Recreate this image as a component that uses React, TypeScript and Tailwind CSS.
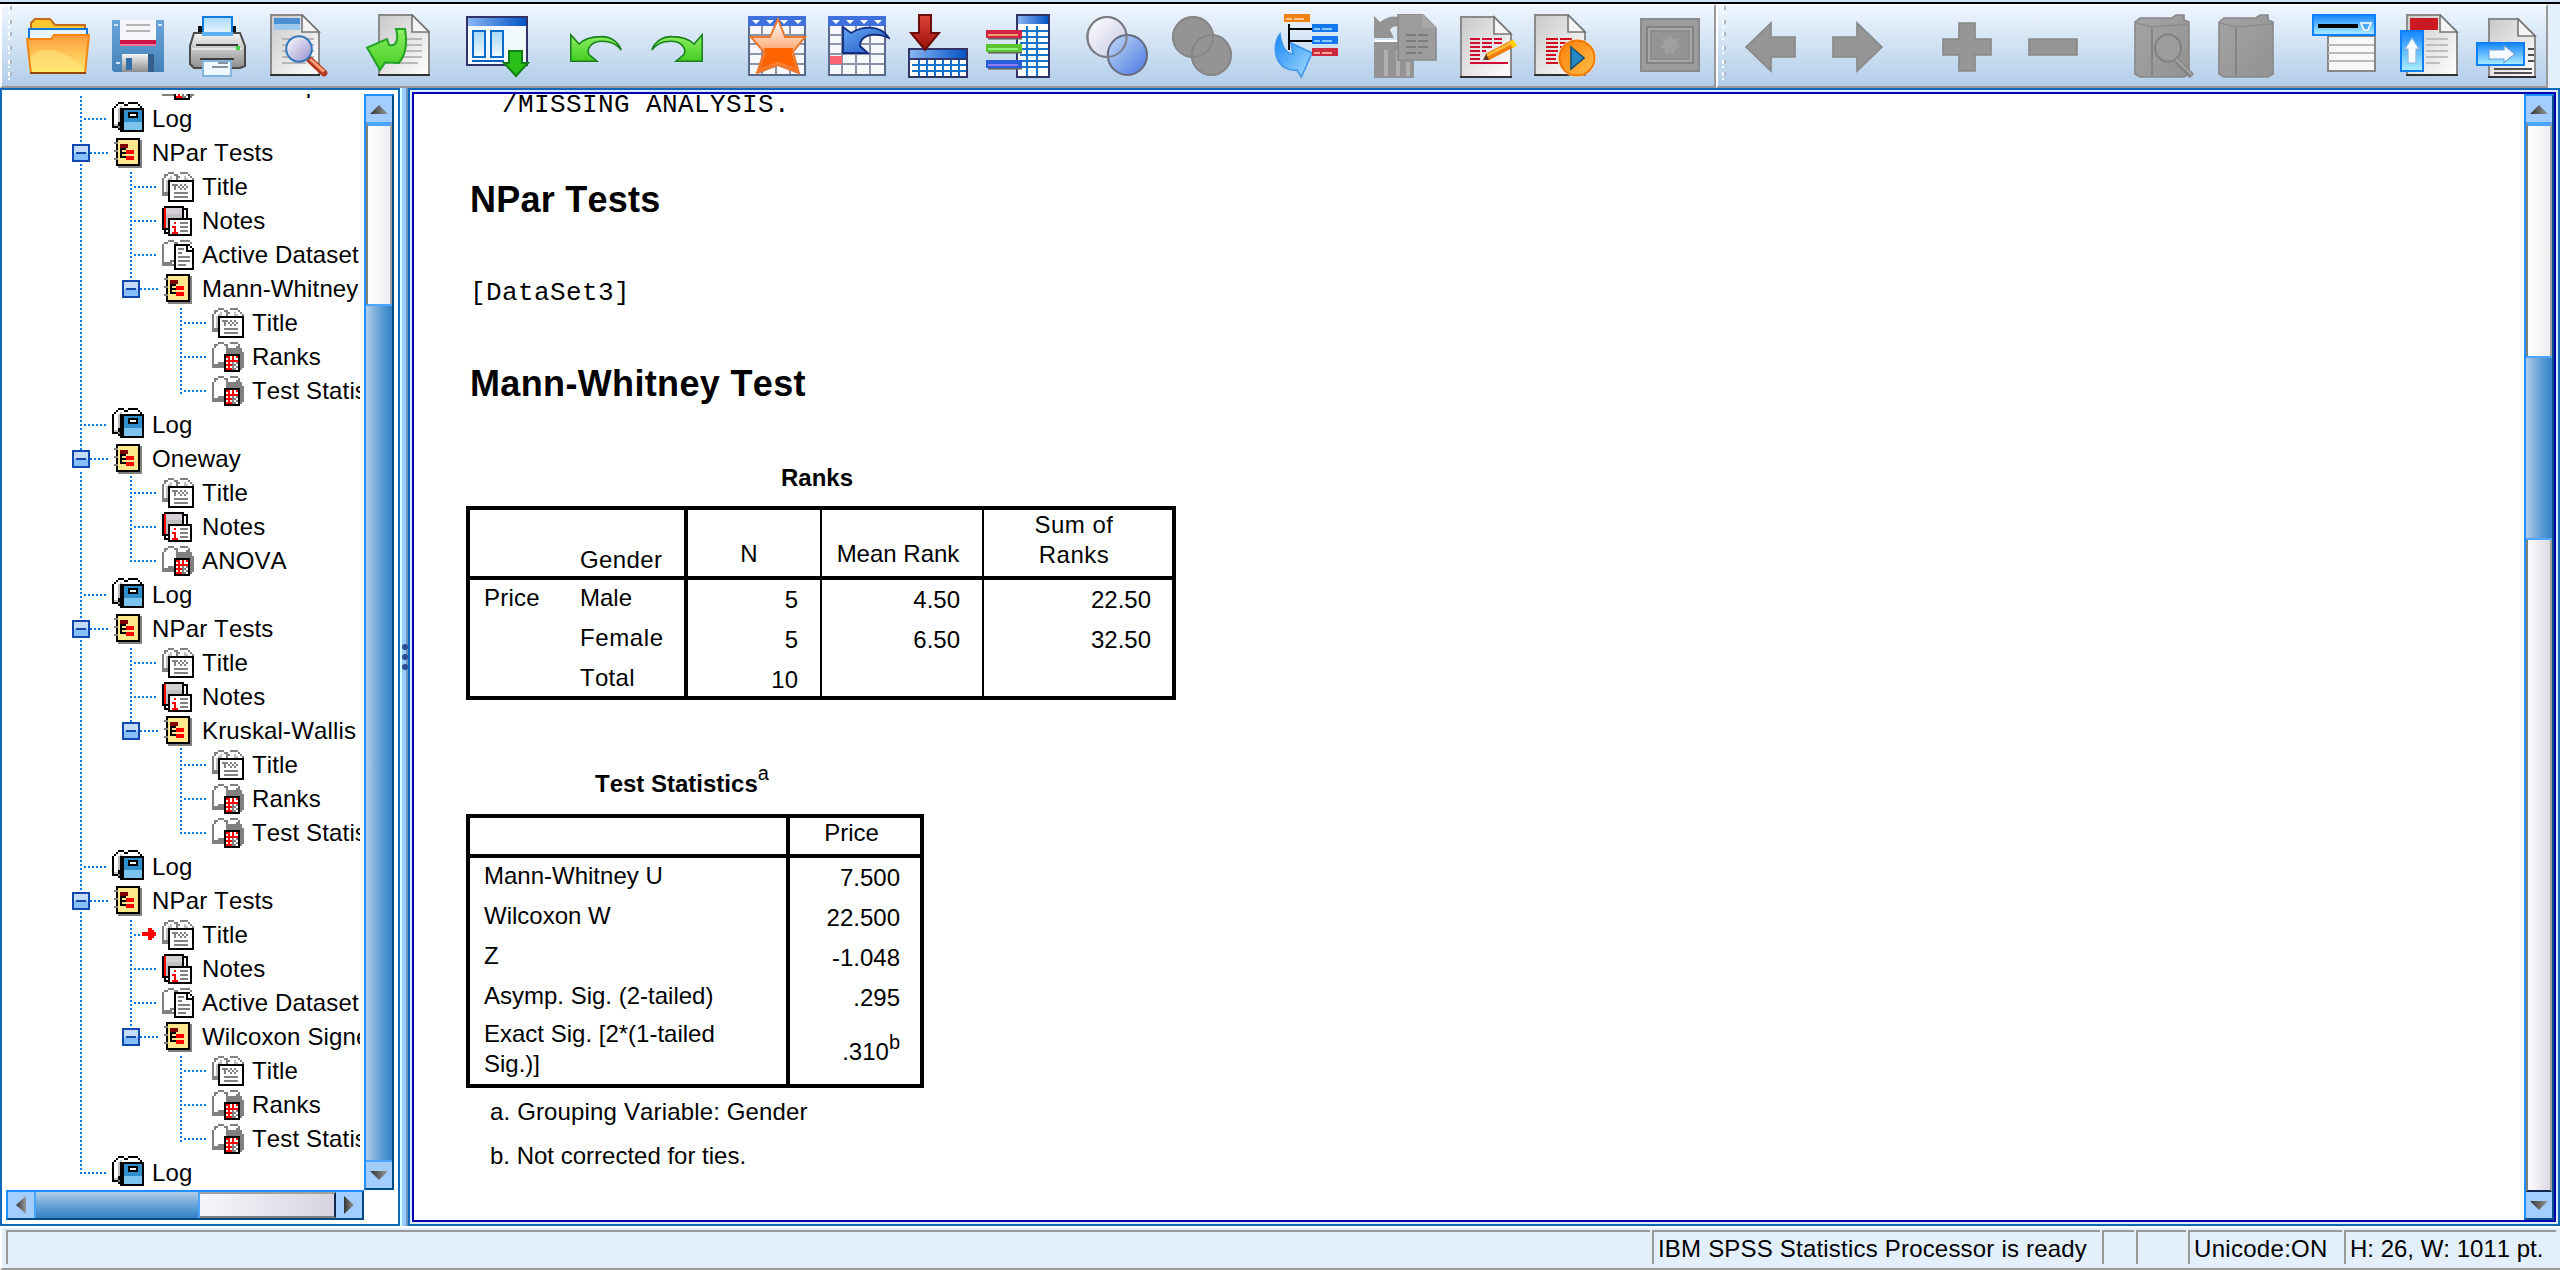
import React from "react";

const PALETTE: Record<string, string> = {
  k: "#000000", g: "#808080", l: "#c0c0c0", w: "#ffffff", r: "#ff0000",
  m: "#800000", y: "#ffe78c", b: "#2f8fcb", c: "#7cc4ee", d: "#d5d0d5",
};

const LOG = [
  "...kkk..kkkkk...",
  "..kwwwkkwwwwwk..",
  ".kwwlwwwwwwwwwk.",
  "kwwlkkkkkkkkkkkk",
  "kwwlkkbbbbbbbbbk",
  "kwwlkkbbkkkkkbbk",
  "kwwlkkbbkwwwkbbk",
  "kwwlkkbbkkkkkbbk",
  "kwwlkkbbbbbbbbbk",
  "kwwlkkbbbbbbbbbk",
  "kwwkkkccccccccck",
  "kllkkkccccccccck",
  "kkkgkkccccccccck",
  "...kkkccccccccck",
  "....kkkkkkkkkkkk",
];
const OUTLINE = [
  "................",
  "..kkkkkkkkkkkk..",
  "..kyyyyyyyyyykg.",
  ".ggyyyyyyyyyykg.",
  "..kymmmmyyyyykg.",
  "..kymmmmyyyyykg.",
  "..kykkkyyyyyykg.",
  ".ggykyyrrrryykg.",
  "..kykkkrrrryykg.",
  "..kykyyyyyyyykg.",
  "..kykkkrrrryykg.",
  ".ggyyyyrrrryykg.",
  "..kyyyyyyyyyykg.",
  "..kyyyyyyyyyykg.",
  "..kkkkkkkkkkkkg.",
  "...gggggggggggg.",
];
const TITLE = [
  "................",
  "...ggg...gggg...",
  ".ggwwwggwwwwwg..",
  ".gwwlwwggwwlwwg.",
  "gwwllwwgwwwllwwg",
  "gwlkkkkkkkkkkkkk",
  "gwlkwwwwwwwwwwwk",
  "gwlkwgggwgwgwwwk",
  "gwlkwwgwgwgwgwwk",
  "gwlkwwgwwgwgwwwk",
  "gwlkwwwwwwwwwwwk",
  "gggkwwgggggggwwk",
  "gggkwwwwwwwwwwwk",
  "...kwwgggggggwwk",
  "...kwwwwwwwwwwwk",
  "...kkkkkkkkkkkkk",
];
const NOTES = [
  "................",
  ".kkkkkkkkkk.....",
  "krddddddddkkk...",
  "krddddddddkwk...",
  "krddddddddkwk...",
  "krllllllllkwk...",
  "krllllllllkwk...",
  "krlkkkkkkkkkkkk.",
  "krlkwwwwwwwwwwk.",
  "krlkwwrwwggggwk.",
  "krlkwwwwwwwwwwk.",
  "krlkwrrwwggggwk.",
  "kkkkwwrwwwwwwwk.",
  ".kwkwwrwwggggwk.",
  ".kkkwrrrwwwwwwk.",
  "...kkkkkkkkkkkk.",
];
const DATASET = [
  "................",
  "...ggg...ggggg..",
  ".ggwwwggwwwwwwg.",
  "gwwwwwkkkkkkkk..",
  "gwwwwwkwwwwwkwk.",
  "gwwwwwkwgggwkwwk",
  "gwwwwwkwwwwwkkkk",
  "gwwwwwkwggwwwwwk",
  "gwwwwwkwwwwwwwwk",
  "gwwwwwkwggggggwk",
  "gwwwwwkwwwwwwwwk",
  "gwwwggkwggggggwk",
  "gggggwkwwwwwwwwk",
  "ggggggkwggggwwwk",
  "......kwwwwwwwwk",
  "......kkkkkkkkkk",
];
const TABLE = [
  "................",
  "...ggg...gggg...",
  ".ggwwwggwwwwwg..",
  ".gwwwwwgwwwwgg..",
  "gwwwwwwgggggggg.",
  "gwwwwwwgggggggg.",
  "gwwwwwwggggggggg",
  "gwwwwwkkkkkkkkgg",
  "gwwwwwkrrwrwrkgg",
  "gwwwwwkwrwrwwkgg",
  "gwwwwwkrrrrrrkgg",
  "gwwgggkwrwgwgkgg",
  "ggggggkrrrggwkgg",
  "ggggggkwrwgwgkgg",
  "......krrrggwkg.",
  "......kkkkkkkk..",
];
const TREE_ICONS = { log: LOG, outline: OUTLINE, title: TITLE, notes: NOTES, dataset: DATASET, table: TABLE };
type TreeIcon = keyof typeof TREE_ICONS;

function PixelIcon({ rows }: { rows: string[] }) {
  return (
    <svg viewBox="0 0 16 16" className="h-8 w-8 shrink-0" shapeRendering="crispEdges">
      {rows.flatMap((row, y) =>
        [...row].map((c, x) => (c === "." ? null : <rect key={`${x}-${y}`} x={x} y={y} width="1" height="1" fill={PALETTE[c]} />)),
      )}
    </svg>
  );
}

type Node = { level: 0 | 1 | 2; icon: TreeIcon; label: string; last?: boolean; current?: boolean };
const NODES: Node[] = [
  { level: 1, icon: "table", label: "One-Sample Statistics", last: true },
  { level: 0, icon: "log", label: "Log" },
  { level: 0, icon: "outline", label: "NPar Tests" },
  { level: 1, icon: "title", label: "Title" },
  { level: 1, icon: "notes", label: "Notes" },
  { level: 1, icon: "dataset", label: "Active Dataset" },
  { level: 1, icon: "outline", label: "Mann-Whitney", last: true },
  { level: 2, icon: "title", label: "Title" },
  { level: 2, icon: "table", label: "Ranks" },
  { level: 2, icon: "table", label: "Test Statistics", last: true },
  { level: 0, icon: "log", label: "Log" },
  { level: 0, icon: "outline", label: "Oneway" },
  { level: 1, icon: "title", label: "Title" },
  { level: 1, icon: "notes", label: "Notes" },
  { level: 1, icon: "table", label: "ANOVA", last: true },
  { level: 0, icon: "log", label: "Log" },
  { level: 0, icon: "outline", label: "NPar Tests" },
  { level: 1, icon: "title", label: "Title" },
  { level: 1, icon: "notes", label: "Notes" },
  { level: 1, icon: "outline", label: "Kruskal-Wallis", last: true },
  { level: 2, icon: "title", label: "Title" },
  { level: 2, icon: "table", label: "Ranks" },
  { level: 2, icon: "table", label: "Test Statistics", last: true },
  { level: 0, icon: "log", label: "Log" },
  { level: 0, icon: "outline", label: "NPar Tests" },
  { level: 1, icon: "title", label: "Title", current: true },
  { level: 1, icon: "notes", label: "Notes" },
  { level: 1, icon: "dataset", label: "Active Dataset" },
  { level: 1, icon: "outline", label: "Wilcoxon Signed", last: true },
  { level: 2, icon: "title", label: "Title" },
  { level: 2, icon: "table", label: "Ranks" },
  { level: 2, icon: "table", label: "Test Statistics", last: true },
  { level: 0, icon: "log", label: "Log", last: true },
];

/* One 50px indent step: dotted stem, elbow and, for branches, the collapse box. */
function Guide({ node, odd }: { node: Node; odd: boolean }) {
  const branch = node.icon === "outline";
  const from = odd ? 2 : 0;
  const dots: React.ReactElement[] = [];
  for (let y = from; y < 34; y += 4) {
    if (node.last && y > 18) continue;
    if (branch && y > 6 && y < 28) continue;
    dots.push(<rect key={`v${y}`} x="18" y={y} width="2" height="2" />);
  }
  for (let x = branch ? 28 : 22; x < 46; x += 4) {
    if (node.current && x > 26 && x < 42) continue;
    dots.push(<rect key={`h${x}`} x={x} y="16" width="2" height="2" />);
  }
  return (
    <svg viewBox="0 0 50 34" className="h-[34px] w-[50px] shrink-0" fill="#0078e6" shapeRendering="crispEdges">
      {dots}
      {branch && (
        <>
          <rect x="10" y="8" width="18" height="18" fill="#1048b0" />
          <rect x="12" y="10" width="14" height="7" fill="#c4dcfa" />
          <rect x="12" y="17" width="14" height="7" fill="#86bffc" />
          <rect x="14" y="16" width="10" height="2" fill="#1048b0" />
        </>
      )}
      {node.current && <path d="M30 14h6v-4h4v2h2v2h2v4h-2v2h-2v2h-4v-4h-6z" fill="#ff0000" />}
    </svg>
  );
}

function Stem({ odd, on }: { odd: boolean; on: boolean }) {
  return (
    <svg viewBox="0 0 50 34" className="h-[34px] w-[50px] shrink-0" fill="#0078e6" shapeRendering="crispEdges">
      {on && Array.from({ length: 9 }, (_, i) => i * 4 + (odd ? 2 : 0)).filter((y) => y < 34).map((y) => (
        <rect key={y} x="18" y={y} width="2" height="2" />
      ))}
    </svg>
  );
}

function TreeRow({ node, index }: { node: Node; index: number }) {
  const odd = index % 2 === 1;
  return (
    <div className="flex h-[34px] shrink-0 items-start whitespace-nowrap">
      {node.level > 0 && <Stem odd={odd} on />}
      {node.level > 1 && <Stem odd={odd} on={false} />}
      <Guide node={node} odd={odd} />
      <PixelIcon rows={TREE_ICONS[node.icon]} />
      <span className="pl-[8px] text-[24px] leading-[34px] tracking-[0.15px]">{node.label}</span>
    </div>
  );
}

function Arrow({ dir }: { dir: "up" | "down" | "left" | "right" }) {
  const d = { up: "M9 1L18 10H0Z", down: "M0 1H18L9 10Z", left: "M10 0V18L0 9Z", right: "M0 0L10 9L0 18Z" }[dir];
  const vertical = dir === "up" || dir === "down";
  return (
    <svg viewBox={vertical ? "0 0 18 11" : "0 0 10 18"} className={vertical ? "h-[11px] w-[18px]" : "h-[18px] w-[10px]"}>
      <defs>
        <linearGradient id={`arrow-${dir}`} x1="0" x2="1">
          <stop offset="0" stopColor="#333" />
          <stop offset="1" stopColor="#999" />
        </linearGradient>
      </defs>
      <path d={d} fill={`url(#arrow-${dir})`} />
    </svg>
  );
}

function ThumbV({ className }: { className: string }) {
  return <div className={`shrink-0 border-y-2 border-[#4aa5ff] bg-[linear-gradient(to_right,#b2cfe9_0%,#7eb0de_35%,#5096d2_70%,#3580c4_100%)] ${className}`} />;
}

/* ---------- toolbar drawings, each on a 32-unit canvas ---------- */

function Tool({ className = "", children }: { className?: string; children: React.ReactNode }) {
  return <svg viewBox="0 0 32 32" className={`h-16 w-16 shrink-0 ${className}`}>{children}</svg>;
}

function Defs() {
  const lin = (id: string, a: string, b: string, diag = false) => (
    <linearGradient id={id} x1="0" y1="0" x2={diag ? "1" : "0"} y2="1">
      <stop offset="0" stopColor={a} />
      <stop offset="1" stopColor={b} />
    </linearGradient>
  );
  return (
    <svg className="absolute h-0 w-0">
      <defs>
        {lin("folder", "#ff9a3c", "#ffee70")}
        {lin("paper", "#c9c9c9", "#ffffff", true)}
        {lin("steel", "#f4f4f4", "#8e8e8e")}
        {lin("floppy", "#6aa6dc", "#4682b8")}
        {lin("lime", "#8cf060", "#44cc22")}
        {lin("sheet", "#a8d8fa", "#f0faff")}
        {lin("star", "#ffffff", "#ff6a10")}
        {lin("blue", "#66a8f4", "#1c50c0", true)}
        {lin("sky", "#1486ff", "#b0f0ff")}
        {lin("aqua", "#1684f4", "#a8e0ff", true)}
        {lin("red", "#e04438", "#98100c")}
        {lin("lens", "#ffffff", "#9490cc", true)}
        {lin("pale", "#ffffff", "#c4c8e4", true)}
        {lin("peri", "#c4daf8", "#4878e0", true)}
        {lin("orange", "#ff7a08", "#ffc048", true)}
        {lin("grey", "#a4a4a4", "#929292", true)}
        <linearGradient id="bar" x1="0" x2="1">
          <stop offset="0" stopColor="#88b4f0" />
          <stop offset="1" stopColor="#0454c8" />
        </linearGradient>
      </defs>
    </svg>
  );
}

function DocPage({ x, y, w, h, fold }: { x: number; y: number; w: number; h: number; fold: number }) {
  const r = x + w;
  return (
    <>
      <path d={`M${x + 0.5} ${y + 0.5}H${r - fold}L${r - 0.5} ${y + fold}V${y + h - 0.5}H${x + 0.5}Z`} fill="url(#paper)" stroke="#8a8a8a" />
      <path d={`M${x} ${y + h - 0.5}H${r}`} stroke="#303030" />
      <path d={`M${r - fold} ${y + 0.5}V${y + fold}H${r - 0.5}Z`} fill="#f4f4f4" stroke="#777" strokeWidth=".8" />
    </>
  );
}

function GridSheet() {
  return (
    <>
      <rect x="1.5" y="1.5" width="28" height="29" fill="#f6f8fc" stroke="#5a6a8c" />
      <path d="M2 10.5h27M2 15h27M2 20h27M2 25h27M8 6v24M15 6v24M22 6v24" stroke="#8c94ac" />
      <rect x="1" y="1" width="29" height="5" fill="#4070dc" />
      <path d="M3 3h4l-2 2zM10 3h4l-2 2zM17 3h4l-2 2zM24 3h4l-2 2z" fill="#fff" />
    </>
  );
}

const UNDO = "M2.400 10.400V23.600H15.500L11.500 20.300C10 17 13 13.600 18 13.600C22 13.600 25.500 15.200 27.600 18C26 13.500 22 11.200 17.500 11.300C13 11.300 9 12.500 6.500 15Z";

function MainTools() {
  return (
    <>
      <Tool>
        <path d="M2.500 12V4.500L4.500 2.500H12L14.500 5.500H29.500V12Z" fill="#ffc830" stroke="#c86a1c" />
        <path d="M1.500 13V7.500H30.500V13" fill="#e8f4ff" stroke="#0c78e0" />
        <path d="M.5 12.500H12.500L14 10.500H31.500L29.500 29.500H2.500Z" fill="url(#folder)" stroke="#f48410" />
        <path d="M2 22C7 15 20 17 29 28H3Z" fill="#ffe27a" opacity=".6" />
        <path d="M2 29.500H30" stroke="#9c4404" />
      </Tool>
      <Tool className="ml-4">
        <path d="M3 3H29V29H4L3 28Z" fill="url(#floppy)" />
        <path d="M7 3H25V16H7Z" fill="#f4f6fa" />
        <path d="M7 13H25V15H7Z" fill="#cc1444" />
        <path d="M7 15H25V16H7Z" fill="#e87c98" />
        <path d="M10 5.500H22M10 8.500H22" stroke="#b4b4b4" />
        <path d="M8 20H21V29H8Z" fill="url(#steel)" />
        <path d="M10 22H13V28H10Z" fill="#3470ac" />
        <path d="M21 20H24V29H21Z" fill="#33608f" />
        <path d="M4 5H6V6H4ZM26 5H28V6H26ZM5 24H7V25H5Z" fill="#cfe4f6" />
      </Tool>
      <Tool className="ml-4">
        <path d="M6 6H25V12H6Z" fill="#111" />
        <path d="M8.500 1.500H23V11H8.500Z" fill="url(#sheet)" stroke="#0c7ce0" />
        <path d="M4 9.500H27L29.500 16V26L27 27H4L2 25V16Z" fill="url(#steel)" stroke="#4a4a4a" />
        <path d="M8 9H23.500V11H8Z" fill="#5cb0f0" />
        <path d="M5 15.500H26M7 22.500H24" stroke="#3c3c3c" />
        <path d="M3 17.500H28" stroke="#e4e4e4" />
        <path d="M25 16H27V18H25Z" fill="#44d044" />
        <path d="M8.500 23.500H22.500V31H8.500Z" fill="#eef8ff" stroke="#84b4dc" />
        <path d="M16 24.500H21M13 26.500H21" stroke="#88929c" />
      </Tool>
      <Tool className="ml-4">
        <DocPage x={2} y={0} w={25} h={31} fold={9} />
        <path d="M4 2H17V5H4Z" fill="#4c90d4" />
        <path d="M4 5H17V8H4Z" fill="#9cc8ee" />
        <path d="M8 12.500H24M8 15.500H24M8 18.500H24M8 21.500H24M8 24.500H20" stroke="#a8a8a8" strokeWidth=".8" />
        <path d="M22 23L29 29.500" stroke="#b43820" strokeWidth="3.400" strokeLinecap="round" />
        <path d="M22 22.500L29 28.800" stroke="#ffa078" strokeWidth="1.400" />
        <circle cx="16.500" cy="17.500" r="6.400" fill="url(#lens)" stroke="#3478bc" />
      </Tool>
      <Tool className="ml-9">
        <DocPage x={6} y={0} w={26} h={31} fold={9} />
        <path d="M20 12.500H28M20 15.500H28M19 18.500H28M17 21.500H28M14 24.500H26" stroke="#a8a8a8" strokeWidth=".8" />
        <path d="M.5 16.800L10.500 12.500L11.500 15.500C15 16.500 16.500 13 15 7.500H19.500C21 16 19.500 21 16.500 24.500L9.500 24.300L7 28Z" fill="url(#lime)" stroke="#24a028" />
      </Tool>
      <Tool className="ml-9">
        <path d="M.5 1.500H30.500V25.500H.5Z" fill="#f2f9fd" stroke="#303468" />
        <path d="M1 2H30V6H1Z" fill="url(#bar)" />
        <path d="M3.500 8.500H9.500V21.500H3.500ZM12.500 8.500H18.500V21.500H12.500Z" fill="url(#sheet)" stroke="#0c6ccc" />
        <path d="M3 23.500H19" stroke="#0c60c0" />
        <path d="M21.500 18.500H28V24.500H31L25 31L19 24.500H21.500Z" fill="#28c018" stroke="#108010" />
      </Tool>
      <Tool className="ml-9"><path d={UNDO} fill="url(#lime)" stroke="#18801c" strokeWidth=".8" /></Tool>
      <Tool className="ml-4"><path d={UNDO} transform="translate(30.500 0) scale(-1 1)" fill="url(#lime)" stroke="#18801c" strokeWidth=".8" /></Tool>
      <Tool className="ml-9">
        <GridSheet />
        <path d="M16 2.500L19.500 11.500H29.500L23.500 19L26.500 29.500L16 25.500L5.500 29.500L9 19L2.500 11.500H12Z" fill="url(#star)" stroke="#e87830" />
        <path d="M9 17H23.500L23 20L25 27L16 24L7 27L9.500 20Z" fill="#ff6400" />
      </Tool>
      <Tool className="ml-4">
        <GridSheet />
        <path d="M2 21H8V25H2Z" fill="#f86470" />
        <path d="M8.500 6.500V19.500H21L17 16C17 11 23 8.500 31.500 12C27 5 18 6 12.500 9.500Z" fill="url(#blue)" stroke="#102c78" strokeWidth=".9" />
      </Tool>
      <Tool className="ml-4">
        <path d="M1.500 17.500H30.500V31.500H1.500Z" fill="#fff" stroke="#303468" />
        <path d="M2 18H30V22H2Z" fill="url(#bar)" />
        <path d="M2 22.500H30" stroke="#303468" />
        <path d="M3 25.500H30M3 28.500H30M6.500 23V31M10.500 23V31M14.500 23V31M18.500 23V31M22.500 23V31M26.500 23V31" stroke="#1474cc" />
        <path d="M6.500.5H12.500V9.500H16.500L9.500 18L2.500 9.500H6.500Z" fill="url(#red)" stroke="#6c0c08" />
      </Tool>
      <Tool className="ml-4">
        <path d="M15.500.5H31.500V31.500H15.500Z" fill="#fff" stroke="#303468" />
        <path d="M16 1H31V5H16Z" fill="url(#bar)" />
        <path d="M17 8.500H31M17 11.500H31M17 14.500H31M17 17.500H31M17 20.500H31M17 23.500H31M17 26.500H31M20.500 6V31M25.500 6V31" stroke="#1474cc" />
        {[[8, "#d02440", "#f0a070"], [15, "#5cc430", "#90f080"], [23, "#2860dc", "#8c7cf0"]].map(([y, a, b]) => (
          <React.Fragment key={y}>
            <rect x="1" y={Number(y) + 3.500} width="17" height="1.300" fill="#666" />
            <rect x="0" y={y} width="18" height="4" fill={String(a)} />
            <rect x="1" y={Number(y) + 2} width="15" height="1" fill={String(b)} />
          </React.Fragment>
        ))}
      </Tool>
      <Tool className="ml-9">
        <ellipse cx="10.500" cy="11.500" rx="9.800" ry="10" fill="url(#pale)" stroke="#7c7c84" />
        <ellipse cx="20.700" cy="20.500" rx="9.800" ry="10" fill="url(#peri)" stroke="#66687c" />
        <ellipse cx="10.500" cy="11.500" rx="9.800" ry="10" fill="none" stroke="#7c7c84" />
      </Tool>
      <Tool className="ml-5">
        <ellipse cx="11.500" cy="11.500" rx="10.500" ry="10.500" fill="#949494" />
        <ellipse cx="20.700" cy="20.500" rx="10.300" ry="10.500" fill="#949494" />
        <ellipse cx="11.500" cy="11.500" rx="10" ry="10" fill="none" stroke="#868686" />
        <ellipse cx="20.700" cy="20.500" rx="9.800" ry="10" fill="none" stroke="#868686" />
      </Tool>
      <Tool className="ml-10">
        <path d="M3 10C0 14 0 20 2.500 24C4.500 27 8 28.500 11.500 28L13.700 31.500L19 19.500L8.500 14.500L9.500 20C6.500 20 4 17 3 10Z" fill="url(#aqua)" stroke="#3c94ec" strokeWidth=".8" />
        <path d="M7.500 5V18M7.500 7.500H19M7.500 13.500H19" stroke="#000" fill="none" />
        {[[5, 0, "#f08010", "#ffc890"], [19, 5, "#1478f0", "#88ccff"], [19, 11, "#1478f0", "#88ccff"], [19, 17, "#cc2840", "#ffa890"]].map(([x, y, a, b]) => (
          <React.Fragment key={`${x}${y}`}>
            <rect x={x} y={y} width="13" height="4" fill={String(a)} />
            <rect x={Number(x) + 1} y={Number(y) + 2} width="3" height="1" fill={String(b)} />
            <rect x={Number(x) + 5} y={Number(y) + 2} width="5" height="1" fill={String(b)} />
          </React.Fragment>
        ))}
      </Tool>
      <Tool className="ml-9">
        <path d="M0 1L3 4C8 0 14 0 18 6L14 8C12 5 9 6 8 8L10 12H0Z" fill="#949494" />
        <path d="M0 13.500H12" stroke="#fff" />
        <path d="M0 14H20V32H0Z" fill="#949494" />
        <path d="M6 18V31M12 18V31M17 24V31" stroke="#b0b0b0" strokeWidth="2" />
        <path d="M12 0H24L31 7V23H12Z" fill="#9c9c9c" stroke="#8a8a8a" strokeWidth=".8" />
        <path d="M24 0V7H31" fill="#a8a8a8" />
        <path d="M16 10.500H27M16 13.500H27M16 16.500H27M16 19.500H24" stroke="#7c7c7c" strokeDasharray="5 1" />
      </Tool>
      <Tool className="ml-5">
        <DocPage x={1} y={1} w={26} h={31} fold={9} />
        <path d="M6 12.500H22M6 14.500H22M6 16.500H17M6 18.500H14M6 20.500H12M6 22.500H12" stroke="#d00c34" strokeDasharray="5 1" />
        <path d="M6 24.500H25" stroke="#d00c34" />
        <path d="M14.500 21.500L28 14.500" stroke="#f07c08" strokeWidth="3.600" />
        <path d="M14.500 20.800L28 13.800" stroke="#ffb838" strokeWidth="1.400" />
        <path d="M26.500 15.500L28.500 14.300" stroke="#ffd400" strokeWidth="3.600" />
        <path d="M12.500 23L15.600 23L14 20Z" fill="#5c3c1c" />
      </Tool>
      <Tool className="ml-3">
        <DocPage x={0} y={0} w={26} h={31} fold={9} />
        <path d="M6 12.500H20M6 14.500H16M6 16.500H14M6 18.500H12M6 20.500H11M6 22.500H11M6 24.500H12" stroke="#d00c1c" strokeDasharray="6 1" />
        <circle cx="21.500" cy="22" r="9.600" fill="#fff" opacity=".8" />
        <circle cx="21.500" cy="22" r="8.800" fill="url(#orange)" stroke="#f07800" />
        <path d="M18.500 16.500L25 22L18.500 27.500Z" fill="#2888c4" stroke="#145078" strokeWidth=".8" />
      </Tool>
      <Tool className="ml-10">
        <path d="M1.500 2.500H30.500V28.500H1.500Z" fill="#9c9c9c" stroke="#8a8a8a" />
        <path d="M4.500 6.500H27.500V24.500H4.500Z" fill="#a8a8a8" stroke="#838383" />
        <path d="M6.500 8.500H25.500V22.500H6.500Z" fill="#949494" stroke="#8c8c8c" />
        <path d="M16 10L17.500 13L20.500 12L19.500 15L21 17L18.500 18L17.500 21L16 19L13.500 20.500L13.500 17.500L11 16.500L13 15L12 12L15 13Z" fill="#a0a0a0" />
      </Tool>
    </>
  );
}

const BIG_ARROW = "M3 16.500L15.500 4.500V11.500H27.500V21.500H15.500V28.500Z";

function Book() {
  return (
    <>
      <path d="M1.500 4L4 2H20L22 .5H26V3L28.500 4V30L26 31.500H4L1.500 30Z" fill="url(#grey)" stroke="#888" strokeWidth=".8" />
      <path d="M10 7V31" stroke="#848484" />
      <path d="M2 4.500L10 6.500L28 5" stroke="#8c8c8c" fill="none" strokeWidth=".8" />
    </>
  );
}

function OutlineTools() {
  return (
    <>
      <Tool className="ml-[8px]"><path d={BIG_ARROW} fill="#959595" stroke="#888" strokeWidth=".8" /></Tool>
      <Tool className="ml-[22px]"><path d={BIG_ARROW} transform="translate(31 0) scale(-1 1)" fill="#959595" stroke="#888" strokeWidth=".8" /></Tool>
      <Tool className="ml-[46px]"><path d="M11.500 4.500H19.500V12.500H27.500V20.500H19.500V28.500H11.500V20.500H3.500V12.500H11.500Z" fill="#969696" stroke="#888" strokeWidth=".8" /></Tool>
      <Tool className="ml-[22px]"><path d="M3.500 12.500H27.500V20.500H3.500Z" fill="#969696" stroke="#888" strokeWidth=".8" /></Tool>
      <Tool className="ml-[46px]">
        <Book />
        <ellipse cx="18" cy="17" rx="6.500" ry="6.800" fill="#9c9c9c" stroke="#808080" />
        <path d="M22 23L30 31" stroke="#848484" strokeWidth="3" />
        <path d="M22 22.500L30 30.500" stroke="#a4a4a4" />
      </Tool>
      <Tool className="ml-[18px]"><g transform="translate(1 0)"><Book /></g></Tool>
      <Tool className="ml-[34px]">
        <path d="M8 11H31.500V28.500H8Z" fill="#f8f8f8" stroke="#888" />
        <path d="M8 15.500H31M8 19.500H31M8 23.500H31" stroke="#b8b8b8" />
        <path d="M.5.500H31.500V10.500H.5Z" fill="url(#sky)" stroke="#1080f8" />
        <path d="M3 5H23V7H3Z" fill="#000" />
        <path d="M24.500 4.500H29.500L28 8H26Z" fill="#4ca4ff" stroke="#fff" strokeWidth=".8" />
      </Tool>
      <Tool className="ml-[22px]">
        <DocPage x={4} y={0} w={26} h={31} fold={9} />
        <path d="M6 2H20V8H6Z" fill="#cc1820" />
        <path d="M14 12.500H25M14 15.500H25M14 18.500H25M14 21.500H25M14 24.500H21" stroke="#b0b0b0" strokeWidth=".8" />
        <path d="M1.500 8.500H12.500V28.500H1.500Z" fill="url(#sky)" stroke="#1080f8" />
        <path d="M7 12L10.500 17.500H9V24.500H5V17.500H3.500Z" fill="#f4faff" stroke="#8cb8e0" strokeWidth=".6" />
      </Tool>
      <Tool className="ml-[14px]">
        <DocPage x={6} y={2} w={24} h={30} fold={9} />
        <path d="M26 17.500H29M26 20.500H29M26 23.500H29M9 27.500H28M9 29.500H28" stroke="#505050" />
        <path d="M.5 14.500H24V25.500H.5Z" fill="url(#sky)" stroke="#1080f8" />
        <path d="M6.500 18H14V15.800L19.500 20L14 24.300V22.500H6.500Z" fill="#f4faff" stroke="#6ca0d8" strokeWidth=".6" />
      </Tool>
    </>
  );
}

function Grip() {
  return (
    <svg viewBox="0 0 4 80" className="h-20 w-1 shrink-0" shapeRendering="crispEdges">
      {[0, 14, 26, 40, 54, 66].map((y) => (
        <React.Fragment key={y}>
          <rect x="0" y={y} width="2" height="4" fill="#fff" />
          <rect x="2" y={y} width="2" height="4" fill="#a9b9c9" />
          <rect x="0" y={y + 6} width="2" height="2" fill="#fff" />
        </React.Fragment>
      ))}
    </svg>
  );
}

const OutputTitle = ({ className, children }: { className: string; children: React.ReactNode }) => (
  <div className={`font-bold whitespace-pre ${className}`}>{children}</div>
);

function RanksTable() {
  return (
    <div className="flex h-[194px] w-[710px] border-4 border-black text-[24px] leading-[30px] whitespace-nowrap">
      <div className="flex w-[214px] flex-col">
        <div className="h-[66px] pt-[35px] pl-[110px] tracking-[0.4px]">Gender</div>
        <div className="grid h-[120px] auto-rows-[40px] grid-cols-[96px_104px] border-t-4 border-black pt-[3px] pl-[14px]">
          <span className="tracking-[0.2px]">Price</span><span>Male</span>
          <span className="col-start-2 tracking-[0.6px]">Female</span>
          <span className="col-start-2 tracking-[0.3px]">Total</span>
        </div>
      </div>
      <div className="flex w-[136px] flex-col border-l-4 border-black">
        <div className="h-[66px] pt-[29px] pr-[10px] text-center">N</div>
        <div className="grid h-[120px] auto-rows-[40px] border-t-4 border-black pt-[5px] pr-[22px] text-right"><span>5</span><span>5</span><span>10</span></div>
      </div>
      <div className="flex w-[162px] flex-col border-l-2 border-black">
        <div className="h-[66px] pt-[29px] pr-[8px] text-center">Mean Rank</div>
        <div className="grid h-[120px] auto-rows-[40px] border-t-4 border-black pt-[5px] pr-[22px] text-right"><span>4.50</span><span>6.50</span></div>
      </div>
      <div className="flex w-[190px] flex-col border-l-2 border-black">
        <div className="h-[66px] pt-0 pr-[8px] text-center leading-[30px] tracking-[0.5px]">Sum of<br />Ranks</div>
        <div className="grid h-[120px] auto-rows-[40px] border-t-4 border-black pt-[5px] pr-[21px] text-right"><span>22.50</span><span>32.50</span></div>
      </div>
    </div>
  );
}

function StatisticsTable() {
  return (
    <div className="flex h-[274px] w-[458px] border-4 border-black text-[24px] leading-[30px] whitespace-nowrap">
      <div className="flex w-[316px] flex-col">
        <div className="h-9" />
        <div className="flex flex-1 flex-col border-t-4 border-black pt-[3px] pl-[14px]">
          <span className="h-10">Mann-Whitney U</span>
          <span className="h-10">Wilcoxon W</span>
          <span className="h-10">Z</span>
          <span className="h-[38px]">Asymp. Sig. (2-tailed)</span>
          <span>Exact Sig. [2*(1-tailed<br />Sig.)]</span>
        </div>
      </div>
      <div className="flex flex-1 flex-col border-l-4 border-black">
        <div className="h-9 pr-[7px] text-center">Price</div>
        <div className="flex flex-1 flex-col border-t-4 border-black pt-[5px] pr-[20px] text-right">
          <span className="h-10">7.500</span>
          <span className="h-10">22.500</span>
          <span className="h-10">-1.048</span>
          <span className="h-[54px]">.295</span>
          <span className="flex justify-end">.310<span className="-mt-[10px] text-[20px]">b</span></span>
        </div>
      </div>
    </div>
  );
}

function StatusCell({ className, children }: { className: string; children?: React.ReactNode }) {
  return (
    <div className={`h-[34px] shrink-0 overflow-hidden border-t-2 border-l-2 border-[#999] text-[24px] leading-[34px] whitespace-nowrap ${className}`}>{children}</div>
  );
}

export default function App() {
  return (
    <div className="flex h-[1270px] w-[2560px] flex-col overflow-hidden bg-white font-['Liberation_Sans',Arial,sans-serif] text-black [font-kerning:none]">
      <Defs />
      <div className="h-[4px] shrink-0 border-b-2 border-black bg-[#cfe4f8]" />
      <div className="flex h-[84px] shrink-0 bg-[#e3f0fb]">
        <div className="flex h-[84px] w-[1716px] items-start border-t-2 border-r-2 border-b-2 border-l-2 border-t-white border-r-[#999] border-b-[#999] border-l-white bg-[linear-gradient(to_bottom,#eef6fe,#b2cde9)]">
          <div className="pl-[6px]"><Grip /></div>
          <div className="flex pt-2 pl-[14px]"><MainTools /></div>
        </div>
        <div className="flex h-[84px] w-[832px] items-start border-t-2 border-r-2 border-b-2 border-l-2 border-t-white border-r-[#999] border-b-[#999] border-l-white bg-[linear-gradient(to_bottom,#eef6fe,#b2cde9)]">
          <div className="pl-[4px]"><Grip /></div>
          <div className="flex pt-2 pl-[6px]"><OutlineTools /></div>
        </div>
      </div>

      <div className="flex h-[1138px] shrink-0">
        <div className="flex w-[400px] shrink-0 flex-col border-2 border-[#1068b8] bg-white pt-1">
          <div className="flex h-[1096px]">
            <div className="flex w-[358px] flex-col overflow-hidden pl-[60px]">
              <div className="-mt-[26px] flex flex-col">
                {NODES.map((n, i) => <TreeRow key={i} node={n} index={i} />)}
              </div>
            </div>
            <div className="ml-1 flex w-[30px] flex-col border-t-2 border-r-2 border-b-2 border-l-2 border-t-[#1e90ff] border-r-[#004a84] border-b-[#004a84] border-l-[#1e90ff]">
              <div className="flex h-[26px] shrink-0 items-center justify-center bg-[#a3ccff]"><Arrow dir="up" /></div>
              <div className="h-[182px] shrink-0 border-t-4 border-r-2 border-l-2 border-t-[#4aa5ff] border-r-[#a0a0a0] border-l-[#808080] bg-[linear-gradient(to_right,#ffffff,#eeeef2)]" />
              <ThumbV className="h-[858px]" />
              <div className="flex h-[26px] shrink-0 items-center justify-center bg-[#a3ccff]"><Arrow dir="down" /></div>
            </div>
          </div>
          <div className="ml-1 flex h-[30px] w-[358px] border-t-2 border-r-2 border-b-2 border-l-2 border-t-[#1e90ff] border-r-[#004a84] border-b-[#004a84] border-l-[#1e90ff]">
            <div className="flex w-[26px] items-center justify-center bg-[#a3ccff]"><Arrow dir="left" /></div>
            <div className="w-[166px] border-x-2 border-[#4aa5ff] bg-[linear-gradient(to_bottom,#b2cfe9_0%,#7eb0de_35%,#5096d2_70%,#3580c4_100%)]" />
            <div className="w-[136px] border-y-2 border-r-2 border-t-[#a0a0a0] border-r-[#102850] border-b-[#808080] bg-[linear-gradient(to_right,#f6f6fa,#d6d4e0)]" />
            <div className="flex w-[26px] items-center justify-center bg-[#a3ccff]"><Arrow dir="right" /></div>
          </div>
        </div>

        <div className="flex w-2 shrink-0 flex-col items-center justify-center gap-1 bg-[linear-gradient(to_right,#d8ffff_0_2px,#99ccff_2px_6px,#6b93bb_6px_8px)]">
          {[0, 1, 2].map((i) => <span key={i} className="ml-[2px] h-[6px] w-[6px] rounded-sm bg-[#2c4c94]" />)}
        </div>

        <div className="flex w-[2152px] shrink-0 border-2 border-[#1068b8] bg-[#dfeaf8] p-[2px]">
          <div className="flex flex-1 border-2 border-[#0000b0] bg-white">
            <div className="flex w-[2110px] flex-col overflow-hidden pl-[52px]">
              <div className="pl-[4px] font-['Liberation_Mono','Courier_New',monospace] text-[26px] leading-[22px] tracking-[0.4px] whitespace-pre">  /MISSING ANALYSIS.</div>
              <OutputTitle className="mt-[64px] pl-[4px] text-[36px] leading-[40px] tracking-[0.25px]">NPar Tests</OutputTitle>
              <div className="mt-[58px] pl-[4px] font-['Liberation_Mono','Courier_New',monospace] text-[26px] leading-[30px] tracking-[0.4px]">[DataSet3]</div>
              <OutputTitle className="mt-[56px] pl-[4px] text-[36px] leading-[40px] tracking-[0.35px]">Mann-Whitney Test</OutputTitle>
              <OutputTitle className="mt-[59px] w-[710px] pr-[8px] text-center text-[24px] leading-[30px]">Ranks</OutputTitle>
              <div className="mt-[13px]"><RanksTable /></div>
              <OutputTitle className="mt-[69px] h-[30px] pl-[129px] text-[24px] leading-[30px]">
                Test Statistics<span className="relative -top-[12px] text-[20px] leading-none font-normal">a</span>
              </OutputTitle>
              <div className="mt-[15px]"><StatisticsTable /></div>
              <div className="mt-[9px] pl-[24px] text-[24px] leading-[30px] tracking-[0.15px]">a. Grouping Variable: Gender</div>
              <div className="mt-[14px] pl-[24px] text-[24px] leading-[30px]">b. Not corrected for ties.</div>
            </div>
            <div className="flex w-[30px] shrink-0 flex-col border-t-2 border-r-2 border-b-2 border-l-2 border-t-[#1e90ff] border-r-[#0a5089] border-b-[#0a5089] border-l-[#1e90ff]">
              <div className="flex h-[26px] shrink-0 items-center justify-center bg-[#a3ccff]"><Arrow dir="up" /></div>
              <div className="h-[234px] shrink-0 border-t-4 border-r-2 border-l-2 border-t-[#4aa5ff] border-r-[#a0a0a0] border-l-[#808080] bg-[linear-gradient(to_right,#ffffff,#eeeef2)]" />
              <ThumbV className="h-[184px]" />
              <div className="h-[652px] shrink-0 border-r-2 border-b-2 border-l-2 border-r-[#a0a0a0] border-b-[#102850] border-l-[#808080] bg-[linear-gradient(to_right,#fcfcfe,#dcdae4)]" />
              <div className="flex flex-1 items-center justify-center bg-[#a3ccff]"><Arrow dir="down" /></div>
            </div>
          </div>
        </div>
      </div>

      <div className="h-[2px] shrink-0 bg-white" />
      <div className="flex h-[42px] shrink-0 gap-[2px] border-b-2 border-l-2 border-b-[#999] border-l-white bg-[#e3f0fb] pt-[2px] pl-1">
        <StatusCell className="w-[1644px]" />
        <StatusCell className="w-[448px] pl-[4px] tracking-[0.2px]">IBM SPSS Statistics Processor is ready</StatusCell>
        <StatusCell className="w-[32px]" />
        <StatusCell className="w-[50px]" />
        <StatusCell className="w-[154px] pl-[4px] tracking-[0.3px]">Unicode:ON</StatusCell>
        <StatusCell className="w-[212px] pl-[4px]">H: 26, W: 1011 pt.</StatusCell>
      </div>
    </div>
  );
}
